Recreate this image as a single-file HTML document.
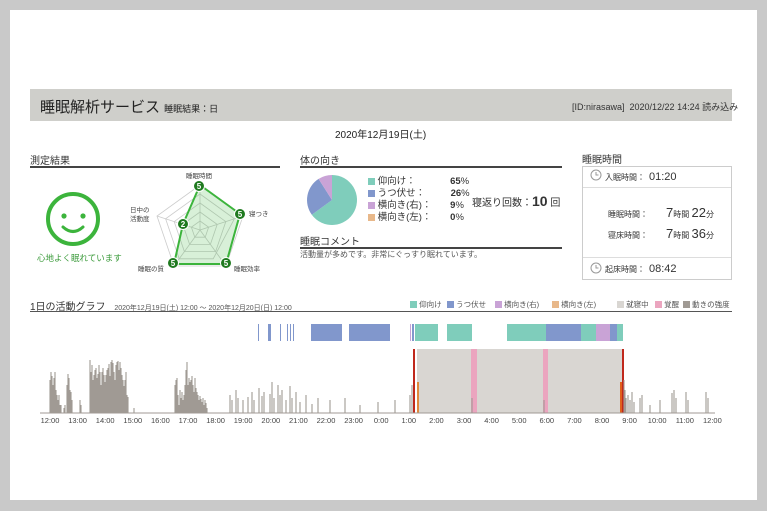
<!DOCTYPE html>
<html><head><meta charset="utf-8"><style>
body{margin:0;width:767px;height:511px;background:#c9c9c9;position:relative;overflow:hidden;font-family:"Liberation Sans","Noto Sans CJK JP",sans-serif;color:#333}
.pg{position:absolute;left:10px;top:10px;width:747px;height:490px;background:#fff}
.a{position:absolute;white-space:nowrap}
.hd{position:absolute;left:30px;top:89px;width:702px;height:32px;background:#cfcfcb}
.sec{position:absolute;font-size:10px;border-bottom:2px solid #444;height:14px}
.sw{display:inline-block;width:7px;height:7px;vertical-align:-1px}
.lg{position:absolute;top:299px;font-size:7.5px;color:#555;white-space:nowrap}
</style></head><body>
<div class="pg"></div>
<div class="hd"></div>
<div class="a" style="left:40px;top:96px;font-size:15px;color:#222">睡眠解析サービス <span style="font-size:9px">睡眠結果：日</span></div>
<div class="a" style="left:572px;top:100px;font-size:9px">[ID:nirasawa]&nbsp; 2020/12/22 14:24 読み込み</div>
<div class="a" style="left:335px;top:126px;font-size:10px;color:#222">2020年12月19日(土)</div>

<div class="sec" style="left:30px;top:152px;width:250px">測定結果</div>
<div class="sec" style="left:300px;top:152px;width:262px">体の向き</div>
<div class="a" style="left:582px;top:151px;font-size:10px">睡眠時間</div>
<div class="sec" style="left:300px;top:233px;width:262px">睡眠コメント</div>
<div class="a" style="left:300px;top:249px;font-size:8px;color:#555">活動量が多めです。非常にぐっすり眠れています。</div>

<svg class="a" style="left:0;top:0" width="767" height="511">
<circle cx="73" cy="219" r="25" fill="none" stroke="#3cb43c" stroke-width="4"/>
<circle cx="64" cy="216" r="2.6" fill="#3cb43c"/><circle cx="83" cy="216" r="2.6" fill="#3cb43c"/>
<path d="M63 227 Q73 236 83 227" fill="none" stroke="#3cb43c" stroke-width="3" stroke-linecap="round"/>
<g fill="none" stroke="#ccc" stroke-width="0.8">
<polygon points="200,185 243,216 226,266 174,266 157,216"/>
<polygon points="200,194 234.4,218.8 213.2,258.8 179.2,258.8 165.6,218.8"/>
<polygon points="200,203 225.8,221.6 215.6,251.6 184.4,251.6 174.2,221.6"/>
<polygon points="200,212 217.2,224.4 210.4,244.4 189.6,244.4 182.8,224.4"/>
<polygon points="200,221 208.6,227.2 205.2,237.2 194.8,237.2 191.4,227.2"/>
<path d="M200 230L200 185M200 230L243 216M200 230L226 266M200 230L174 266M200 230L157 216"/>
</g>
<polygon points="200,185 240,214 226,264 174,264 183,224" fill="rgba(60,180,60,0.2)" stroke="#3cb43c" stroke-width="2"/>
<g fill="#1f7a1f" stroke="#fff" stroke-width="1"><circle cx="199" cy="186" r="5.5"/><circle cx="240" cy="214" r="5.5"/><circle cx="226" cy="263" r="5.5"/><circle cx="173" cy="263" r="5.5"/><circle cx="183" cy="224" r="5.5"/></g>
<g fill="#fff" font-size="8" font-weight="bold" text-anchor="middle"><text x="199" y="189">5</text><text x="240" y="217">5</text><text x="226" y="266">5</text><text x="173" y="266">5</text><text x="183" y="227">2</text></g>
<g fill="#444" font-size="6.5"><text x="186" y="178">睡眠時間</text><text x="249" y="216">寝つき</text><text x="234" y="271">睡眠効率</text><text x="138" y="271">睡眠の質</text><text x="130" y="212">日中の</text><text x="130" y="221">活動度</text></g>

<path d="M332 175A25 25 0 1 1 311.8 214.7L332 200Z" fill="#7fcdbb"/>
<path d="M311.8 214.7A25 25 0 0 1 318.6 178.9L332 200Z" fill="#8197cc"/>
<path d="M318.6 178.9A25 25 0 0 1 332 175L332 200Z" fill="#c9a3d6"/>

<path d="M596 175m-5 0a5 5 0 1 0 10 0a5 5 0 1 0-10 0M596 172v3h2.5M596 268m-5 0a5 5 0 1 0 10 0a5 5 0 1 0-10 0M596 265v3h2.5" fill="none" stroke="#999" stroke-width="1"/>

<rect x="417" y="349" width="205" height="64" fill="#d9d6d2"/>
<rect x="471" y="349" width="6" height="64" fill="#eba5bf"/><rect x="543" y="349" width="5" height="64" fill="#eba5bf"/>
<rect x="413" y="349" width="2" height="64" fill="#c0281c"/><rect x="622" y="349" width="2" height="64" fill="#c0281c"/>
<rect x="417" y="382" width="2" height="31" fill="#e08a3c"/><rect x="620" y="382" width="2" height="31" fill="#e0601c"/>

<g fill="#8197cc"><rect x="258" y="324" width="1" height="17"/><rect x="268" y="324" width="3" height="17"/><rect x="280" y="324" width="1" height="17"/><rect x="287" y="324" width="1" height="17"/><rect x="290" y="324" width="1" height="17"/><rect x="293" y="324" width="1" height="17"/><rect x="311" y="324" width="31" height="17"/><rect x="349" y="324" width="41" height="17"/><rect x="412" y="324" width="2" height="17"/><rect x="546" y="324" width="35" height="17"/><rect x="610" y="324" width="7" height="17"/></g>
<rect x="410" y="324" width="1" height="17" fill="#c9a3d6"/>
<g fill="#7fcdbb"><rect x="415" y="324" width="23" height="17"/><rect x="447" y="324" width="25" height="17"/><rect x="507" y="324" width="39" height="17"/><rect x="581" y="324" width="15" height="17"/><rect x="617" y="324" width="6" height="17"/></g>
<rect x="596" y="324" width="14" height="17" fill="#c9a3d6"/>

<path stroke="#a09a94" stroke-width="1.1" fill="none" d="M50 413V380M51 413V372M52 413V376M53 413V385M54 413V378M55 413V372M56 413V390M57 413V395M58 413V400M59 413V395M60 413V405M61 413V405M64 413V408M65 413V405M67 413V385M68 413V374M69 413V378M70 413V390M71 413V392M72 413V400M80 413V400M81 413V405M90 413V360M91 413V372M92 413V365M93 413V380M94 413V375M95 413V370M96 413V368M97 413V378M98 413V374M99 413V365M100 413V372M101 413V385M102 413V372M103 413V368M104 413V375M105 413V382M106 413V375M107 413V370M108 413V368M109 413V364M110 413V376M111 413V362M112 413V360M113 413V363M114 413V372M115 413V380M116 413V365M117 413V362M118 413V361M119 413V370M120 413V362M121 413V368M122 413V375M123 413V380M124 413V386M125 413V380M126 413V372M127 413V395M128 413V397M134 413V408M175 413V385M176 413V380M177 413V378M178 413V395M179 413V405M180 413V390M181 413V398M182 413V392M183 413V400M184 413V395M185 413V385M186 413V370M187 413V362M188 413V385M189 413V378M190 413V382M191 413V380M192 413V376M193 413V385M194 413V392M195 413V378M196 413V388M197 413V392M198 413V395M199 413V400M200 413V396M201 413V399M202 413V402M203 413V398M204 413V405M205 413V400M206 413V403M207 413V408M230 413V395M232 413V400M236 413V390M238 413V398M243 413V400M248 413V397M252 413V392M254 413V400M259 413V388M262 413V396M264 413V392M270 413V394M272 413V382M274 413V398M278 413V385M280 413V395M282 413V390M286 413V400M290 413V386M292 413V398M296 413V392M300 413V402M306 413V395M312 413V404M318 413V398M330 413V400M345 413V398M360 413V405M378 413V402M395 413V400M410 413V395M412 413V385M472 413V398M544 413V400M624 413V380M625 413V390M626 413V398M628 413V395M630 413V400M632 413V392M634 413V402M640 413V398M642 413V395M650 413V405M660 413V400M672 413V393M674 413V390M676 413V398M686 413V392M688 413V400M706 413V392M708 413V398M40 413H715"/>
<g font-size="7.5" fill="#444" text-anchor="middle">
<text x="50" y="423">12:00</text><text x="77.6" y="423">13:00</text><text x="105.2" y="423">14:00</text><text x="132.8" y="423">15:00</text><text x="160.4" y="423">16:00</text><text x="188" y="423">17:00</text><text x="215.6" y="423">18:00</text><text x="243.2" y="423">19:00</text><text x="270.8" y="423">20:00</text><text x="298.4" y="423">21:00</text><text x="326" y="423">22:00</text><text x="353.6" y="423">23:00</text><text x="381.2" y="423">0:00</text><text x="408.8" y="423">1:00</text><text x="436.4" y="423">2:00</text><text x="464" y="423">3:00</text><text x="491.6" y="423">4:00</text><text x="519.2" y="423">5:00</text><text x="546.8" y="423">6:00</text><text x="574.4" y="423">7:00</text><text x="602" y="423">8:00</text><text x="629.6" y="423">9:00</text><text x="657.2" y="423">10:00</text><text x="684.8" y="423">11:00</text><text x="712.4" y="423">12:00</text></g>
</svg>

<div class="a" style="left:37px;top:252px;font-size:8.5px;color:#3a9a3a">心地よく眠れています</div>

<div class="a" style="left:368px;top:176px;font-size:9.5px;line-height:12px">
<div><span class="sw" style="background:#7fcdbb"></span> 仰向け：<b style="display:inline-block;width:45px;text-align:right">65</b>%</div>
<div><span class="sw" style="background:#8197cc"></span> うつ伏せ：<b style="display:inline-block;width:36px;text-align:right">26</b>%</div>
<div><span class="sw" style="background:#c9a3d6"></span> 横向き(右)：<b style="display:inline-block;width:24px;text-align:right">9</b>%</div>
<div><span class="sw" style="background:#e8b88a"></span> 横向き(左)：<b style="display:inline-block;width:24px;text-align:right">0</b>%</div></div>
<div class="a" style="left:472px;top:193px;font-size:10px">寝返り回数：<b style="font-size:14px">10</b> 回</div>

<div class="a" style="left:582px;top:166px;width:148px;height:112px;border:1px solid #ccc"></div>
<div class="a" style="left:583px;top:187px;width:148px;border-top:1px solid #ddd"></div>
<div class="a" style="left:583px;top:257px;width:148px;border-top:1px solid #ddd"></div>
<div class="a" style="left:605px;top:171px;font-size:8px">入眠時間：<span style="font-size:11px;margin-left:4px">01:20</span></div>
<div class="a" style="left:608px;top:205px;font-size:8px">睡眠時間：<span style="font-size:13px;margin-left:18px">7</span>時間 <span style="font-size:13px">22</span>分</div>
<div class="a" style="left:608px;top:226px;font-size:8px">寝床時間：<span style="font-size:13px;margin-left:18px">7</span>時間 <span style="font-size:13px">36</span>分</div>
<div class="a" style="left:605px;top:263px;font-size:8px">起床時間：<span style="font-size:11px;margin-left:4px">08:42</span></div>

<div class="a" style="left:30px;top:298px;width:702px;height:13px;border-bottom:1px solid #555;font-size:10px">1日の活動グラフ <span style="font-size:7px;margin-left:6px;color:#555">2020年12月19日(土) 12:00 ～ 2020年12月20日(日) 12:00</span></div>
<div class="lg" style="left:410px"><span class="sw" style="background:#7fcdbb"></span> 仰向け</div>
<div class="lg" style="left:447px"><span class="sw" style="background:#8197cc"></span> うつ伏せ</div>
<div class="lg" style="left:495px"><span class="sw" style="background:#c9a3d6"></span> 横向き(右)</div>
<div class="lg" style="left:552px"><span class="sw" style="background:#e8b88a"></span> 横向き(左)</div>
<div class="lg" style="left:617px"><span class="sw" style="background:#d9d6d2"></span> 就寝中</div>
<div class="lg" style="left:655px"><span class="sw" style="background:#eba5bf"></span> 覚醒</div>
<div class="lg" style="left:683px"><span class="sw" style="background:#a09a94"></span> 動きの強度</div>
</body></html>
